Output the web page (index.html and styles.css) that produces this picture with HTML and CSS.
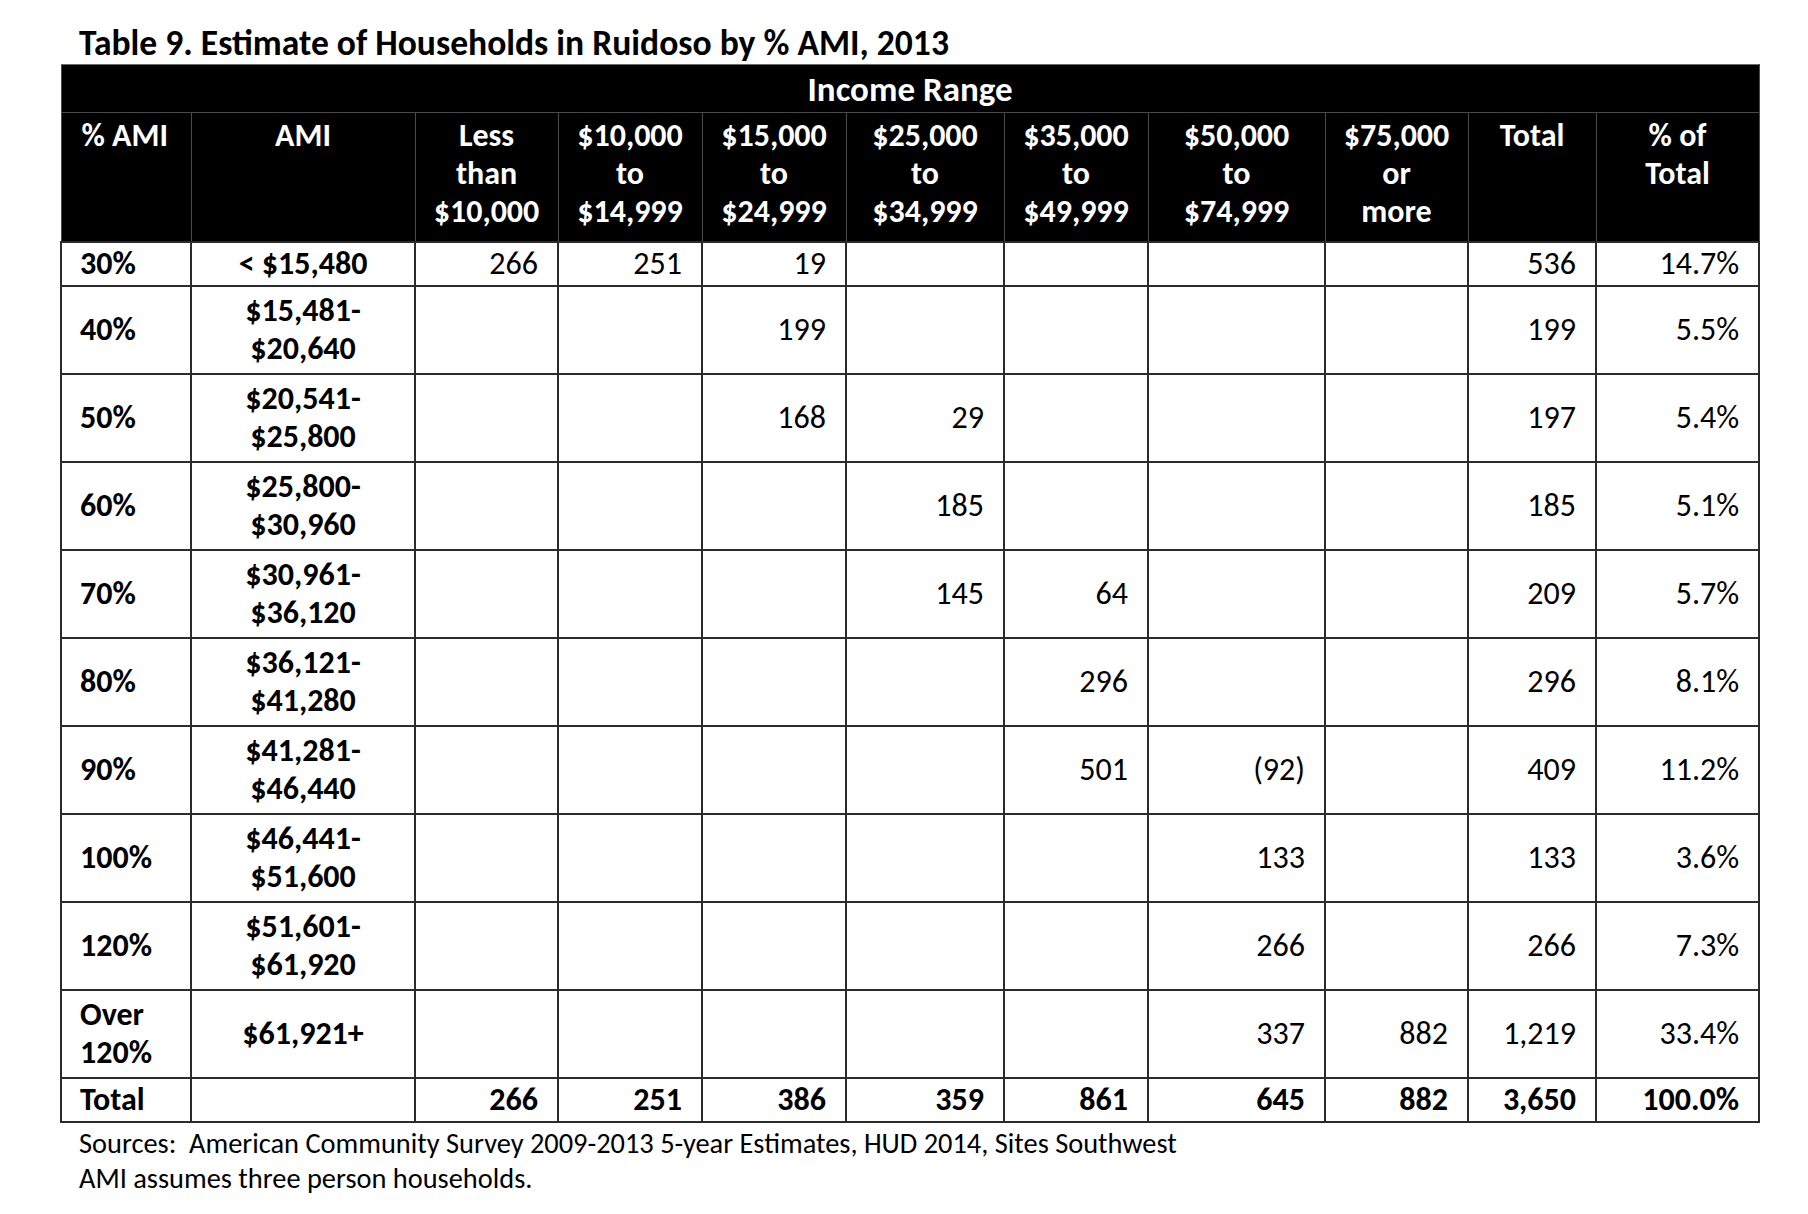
FILE: index.html
```html
<!DOCTYPE html>
<html lang="en">
<head>
<meta charset="utf-8">
<title>Table 9. Estimate of Households in Ruidoso by % AMI, 2013</title>
<link rel="stylesheet" href="styles.css">
</head>
<body>
<div class="page">
  <h1 class="title">Table 9. Estimate of Households in Ruidoso by % AMI, 2013</h1>
  <table class="ami">
    <colgroup>
      <col class="c-pct"><col class="c-ami"><col class="c-a"><col class="c-b"><col class="c-c"><col class="c-d"><col class="c-e"><col class="c-f"><col class="c-g"><col class="c-tot"><col class="c-share">
    </colgroup>
    <thead>
      <tr class="h-range"><th colspan="11">Income Range</th></tr>
      <tr class="h-cols">
        <th class="left">% AMI</th>
        <th>AMI</th>
        <th>Less<br>than<br>$10,000</th>
        <th>$10,000<br>to<br>$14,999</th>
        <th>$15,000<br>to<br>$24,999</th>
        <th>$25,000<br>to<br>$34,999</th>
        <th>$35,000<br>to<br>$49,999</th>
        <th>$50,000<br>to<br>$74,999</th>
        <th>$75,000<br>or<br>more</th>
        <th>Total</th>
        <th>% of<br>Total</th>
      </tr>
    </thead>
    <tbody>
      <tr class="r-short">
        <td class="lbl">30%</td><td class="ami-v">&lt; $15,480</td>
        <td>266</td><td>251</td><td>19</td><td></td><td></td><td></td><td></td><td>536</td><td>14.7%</td>
      </tr>
      <tr class="r-tall">
        <td class="lbl">40%</td><td class="ami-v">$15,481-<br>$20,640</td>
        <td></td><td></td><td>199</td><td></td><td></td><td></td><td></td><td>199</td><td>5.5%</td>
      </tr>
      <tr class="r-tall">
        <td class="lbl">50%</td><td class="ami-v">$20,541-<br>$25,800</td>
        <td></td><td></td><td>168</td><td>29</td><td></td><td></td><td></td><td>197</td><td>5.4%</td>
      </tr>
      <tr class="r-tall">
        <td class="lbl">60%</td><td class="ami-v">$25,800-<br>$30,960</td>
        <td></td><td></td><td></td><td>185</td><td></td><td></td><td></td><td>185</td><td>5.1%</td>
      </tr>
      <tr class="r-tall">
        <td class="lbl">70%</td><td class="ami-v">$30,961-<br>$36,120</td>
        <td></td><td></td><td></td><td>145</td><td>64</td><td></td><td></td><td>209</td><td>5.7%</td>
      </tr>
      <tr class="r-tall">
        <td class="lbl">80%</td><td class="ami-v">$36,121-<br>$41,280</td>
        <td></td><td></td><td></td><td></td><td>296</td><td></td><td></td><td>296</td><td>8.1%</td>
      </tr>
      <tr class="r-tall">
        <td class="lbl">90%</td><td class="ami-v">$41,281-<br>$46,440</td>
        <td></td><td></td><td></td><td></td><td>501</td><td>(92)</td><td></td><td>409</td><td>11.2%</td>
      </tr>
      <tr class="r-tall">
        <td class="lbl">100%</td><td class="ami-v">$46,441-<br>$51,600</td>
        <td></td><td></td><td></td><td></td><td></td><td>133</td><td></td><td>133</td><td>3.6%</td>
      </tr>
      <tr class="r-tall">
        <td class="lbl">120%</td><td class="ami-v">$51,601-<br>$61,920</td>
        <td></td><td></td><td></td><td></td><td></td><td>266</td><td></td><td>266</td><td>7.3%</td>
      </tr>
      <tr class="r-tall">
        <td class="lbl">Over<br>120%</td><td class="ami-v">$61,921+</td>
        <td></td><td></td><td></td><td></td><td></td><td>337</td><td>882</td><td>1,219</td><td>33.4%</td>
      </tr>
      <tr class="r-short r-total">
        <td class="lbl">Total</td><td class="ami-v"></td>
        <td>266</td><td>251</td><td>386</td><td>359</td><td>861</td><td>645</td><td>882</td><td>3,650</td><td>100.0%</td>
      </tr>
    </tbody>
  </table>
  <div class="notes">
    <p>Sources:&nbsp; American Community Survey 2009-2013 5-year Estimates, HUD 2014, Sites Southwest</p>
    <p>AMI assumes three person households.</p>
  </div>
</div>
</body>
</html>
```

FILE: styles.css
```css
html, body {
  margin: 0;
  padding: 0;
  background: #ffffff;
}

body {
  font-family: "Carlito", "Lato", "Liberation Sans", sans-serif;
  color: #000000;
}

.page {
  padding: 24px 0 0 60px;
}

.title {
  margin: 0;
  padding-left: 19px;
  font-size: 35.6px;
  line-height: 38px;
  font-weight: 700;
  height: 40px;
}

.ami {
  border-collapse: collapse;
  table-layout: fixed;
  width: 1698px;
  font-size: 32px;
  line-height: 38px;
}

.c-pct { width: 130px; }
.c-ami { width: 224px; }
.c-a { width: 143px; }
.c-b { width: 144px; }
.c-c { width: 144px; }
.c-d { width: 158px; }
.c-e { width: 144px; }
.c-f { width: 177px; }
.c-g { width: 143px; }
.c-tot { width: 128px; }
.c-share { width: 163px; }

.ami th {
  background: #000000;
  color: #ffffff;
  font-weight: 700;
  border: 1px solid #4a4a4a;
  padding: 0 6px;
}

.h-range th {
  height: 47px;
  text-align: center;
  vertical-align: middle;
  border-top: 1px solid #6b6b6b;
  font-size: 35px;
}

.h-cols th {
  height: 129px;
  vertical-align: top;
  text-align: center;
  padding-top: 4px;
  box-sizing: border-box;
}

.h-cols th.left {
  text-align: left;
  padding-left: 20px;
}

.ami td {
  border: 2px solid #2b2b2b;
  padding: 0 19px 0 18px;
  text-align: right;
  vertical-align: middle;
  font-weight: 400;
}

.ami td.lbl {
  text-align: left;
  font-weight: 700;
}

.ami td.ami-v {
  text-align: center;
  font-weight: 700;
  padding: 0 6px;
}

.r-short td {
  height: 42px;
}

.r-tall td {
  height: 86px;
}

.r-total td {
  font-weight: 700;
}

.notes {
  padding: 3px 0 0 19px;
  font-size: 28.4px;
  line-height: 35px;
}

.notes p {
  margin: 0;
}
```
